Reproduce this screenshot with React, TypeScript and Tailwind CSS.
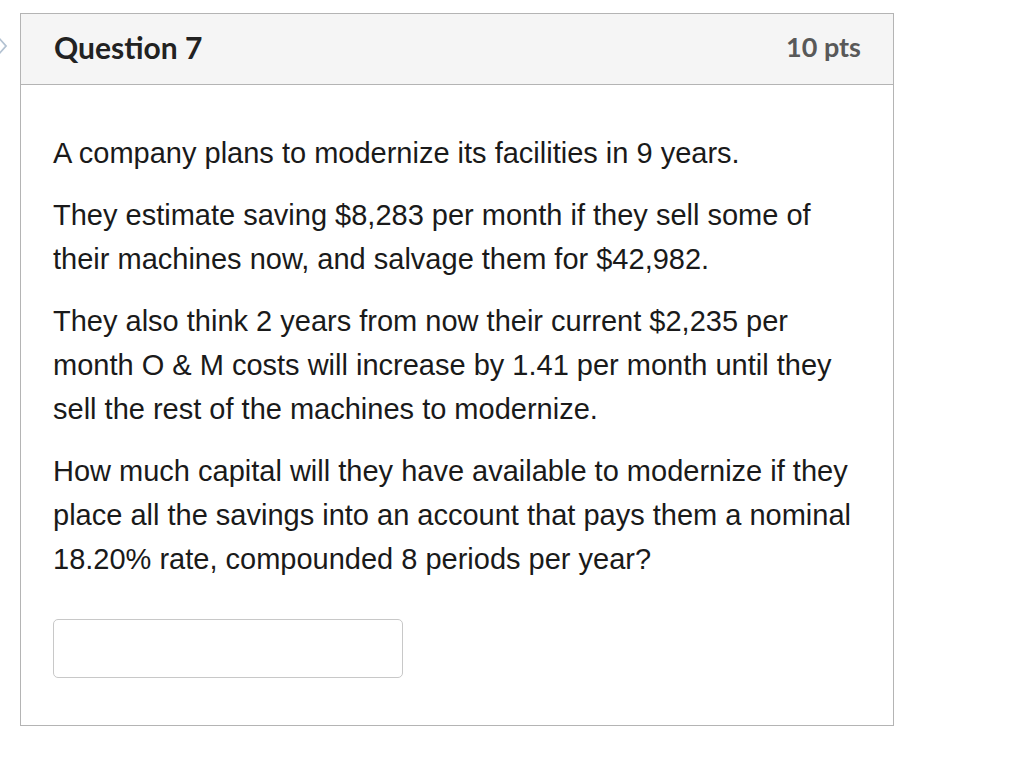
import React from "react";

export default function App() {
  return (
    <div className="relative w-[1024px] h-[764px] bg-white" style={{ fontFamily: '"Liberation Sans", Arial, sans-serif' }}>
      <svg className="absolute left-0 top-[36px]" width="10" height="20" viewBox="0 0 10 20">
        <path d="M-2 1 L6 10 L-2 19" fill="none" stroke="#b3c2d2" strokeWidth="1.8" />
      </svg>
      <div className="absolute left-[20px] top-[13px] w-[874px] border border-[#b4b4b4]">
        <div className="h-[71px] bg-[#f5f5f5] border-b border-[#b4b4b4] flex items-center justify-between pl-[33px] pr-[32px] pb-[4px]">
          <span className="text-[30px] font-bold text-[#222]" style={{ fontFamily: 'Lato, "Open Sans", sans-serif' }}>Question 7</span>
          <span className="text-[27px] font-bold text-[#595959]" style={{ fontFamily: 'Lato, "Open Sans", sans-serif' }}>10 pts</span>
        </div>
        <div className="pl-[32px] pr-[30px] pt-[46px] pb-[47px] text-[29px] leading-[44px] text-[#1a1a1a]">
          <p>A company plans to modernize its facilities in 9 years.</p>
          <p className="mt-[18px]">They estimate saving $8,283 per month if they sell some of their machines now, and salvage them for $42,982.</p>
          <p className="mt-[18px]">They also think 2 years from now their current $2,235 per month O &amp; M costs will increase by 1.41 per month until they sell the rest of the machines to modernize.</p>
          <p className="mt-[18px]">How much capital will they have available to modernize if they place all the savings into an account that pays them a nominal 18.20% rate, compounded 8 periods per year?</p>
          <div className="mt-[38px] w-[350px] h-[59px] border border-[#c8c8c8] rounded-[5px]" />
        </div>
      </div>
    </div>
  );
}
